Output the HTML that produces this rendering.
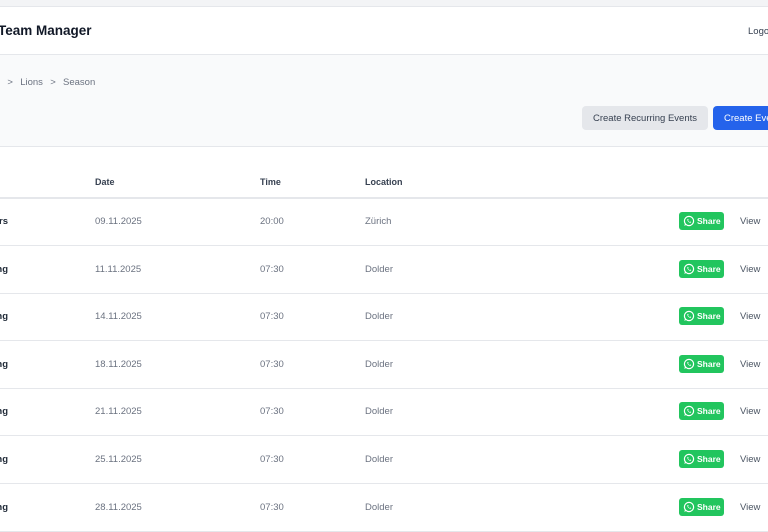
<!DOCTYPE html>
<html><head><meta charset="utf-8"><style>
*{margin:0;padding:0;box-sizing:border-box}
body{width:768px;height:532px;overflow:hidden;background:#fff;font-family:"Liberation Sans",sans-serif;position:relative}
.a{position:absolute;white-space:nowrap}
.r{position:absolute;right:760px;white-space:nowrap;font-size:9.5px;font-weight:bold;color:#1f2937}
.c{position:absolute;font-size:9.5px;color:#6b7280;white-space:nowrap}
.line{position:absolute;left:0;width:768px;height:1px;background:#e5e7eb}
.sh{position:absolute;left:679px;width:45px;height:18px;background:#22c55e;border-radius:3px;color:#fff;font-size:8.5px;font-weight:bold;display:flex;align-items:center;padding-left:4px;gap:2px}
.v{position:absolute;left:740px;font-size:9.5px;color:#4b5563}
</style></head><body>
<div class="a" style="top:0;left:0;width:768px;height:6px;background:#f3f4f6"></div>
<div class="line" style="top:6px"></div>
<div class="a" style="top:23px;left:-2px;font-size:13.5px;font-weight:bold;color:#111827">Team Manager</div>
<div class="a" style="top:26px;left:748px;font-size:9.5px;color:#374151">Logout</div>
<div class="a" style="top:54px;left:0;width:768px;height:93px;background:#f9fafb;border-top:1px solid #e5e7eb;border-bottom:1px solid #e5e7eb"></div>
<div class="a" style="top:77px;left:-2px;font-size:9.5px;color:#6b7280;word-spacing:1px">l &nbsp;&gt;&nbsp; Lions &nbsp;&gt;&nbsp; Season</div>
<div class="a" style="top:106px;left:582px;width:126px;height:24px;background:#e5e7eb;border-radius:4px;font-size:9.5px;color:#374151;text-align:center;line-height:25px">Create Recurring Events</div>
<div class="a" style="top:106px;left:713px;width:80px;height:24px;background:#2563eb;border-radius:4px;font-size:9.5px;color:#fff;padding-left:11px;line-height:25px">Create Event</div>
<div class="c" style="top:177px;left:95px;color:#374151;font-weight:bold;font-size:9px">Date</div>
<div class="c" style="top:177px;left:260px;color:#374151;font-weight:bold;font-size:9px">Time</div>
<div class="c" style="top:177px;left:365px;color:#374151;font-weight:bold;font-size:9px">Location</div>
<div class="line" style="top:197px;height:2px"></div>
<div id="rows"></div>
<script>
var d=[["Players","09.11.2025","20:00","Zürich"],["Training","11.11.2025","07:30","Dolder"],["Training","14.11.2025","07:30","Dolder"],["Training","18.11.2025","07:30","Dolder"],["Training","21.11.2025","07:30","Dolder"],["Training","25.11.2025","07:30","Dolder"],["Training","28.11.2025","07:30","Dolder"]];
var h="";d.forEach(function(r,i){var cy=221+i*47.6,t=cy-5;
h+='<div class="r" style="top:'+t+'px">'+r[0]+'</div><div class="c" style="top:'+t+'px;left:95px">'+r[1]+'</div><div class="c" style="top:'+t+'px;left:260px">'+r[2]+'</div><div class="c" style="top:'+t+'px;left:365px">'+r[3]+'</div>';
h+='<div class="sh" style="top:'+(cy-9)+'px"><svg width="12" height="12" viewBox="0 0 12 12"><circle cx="6" cy="6" r="4.6" fill="none" stroke="#fff" stroke-width="1.2"/><path d="M1.3 10.9L2.1 8.2 3.7 9.7Z" fill="#fff"/><path d="M4.3 4.2c0 2 1.4 3.4 3.4 3.6l.5-.8-1-.5-.5.5c-.8-.3-1.4-.9-1.6-1.6l.5-.5-.5-1z" fill="#fff"/></svg>Share</div>';
h+='<div class="v" style="top:'+t+'px">View</div><div class="line" style="top:'+(cy+24)+'px"></div>';});
document.getElementById("rows").innerHTML=h;
</script>
</body></html>
